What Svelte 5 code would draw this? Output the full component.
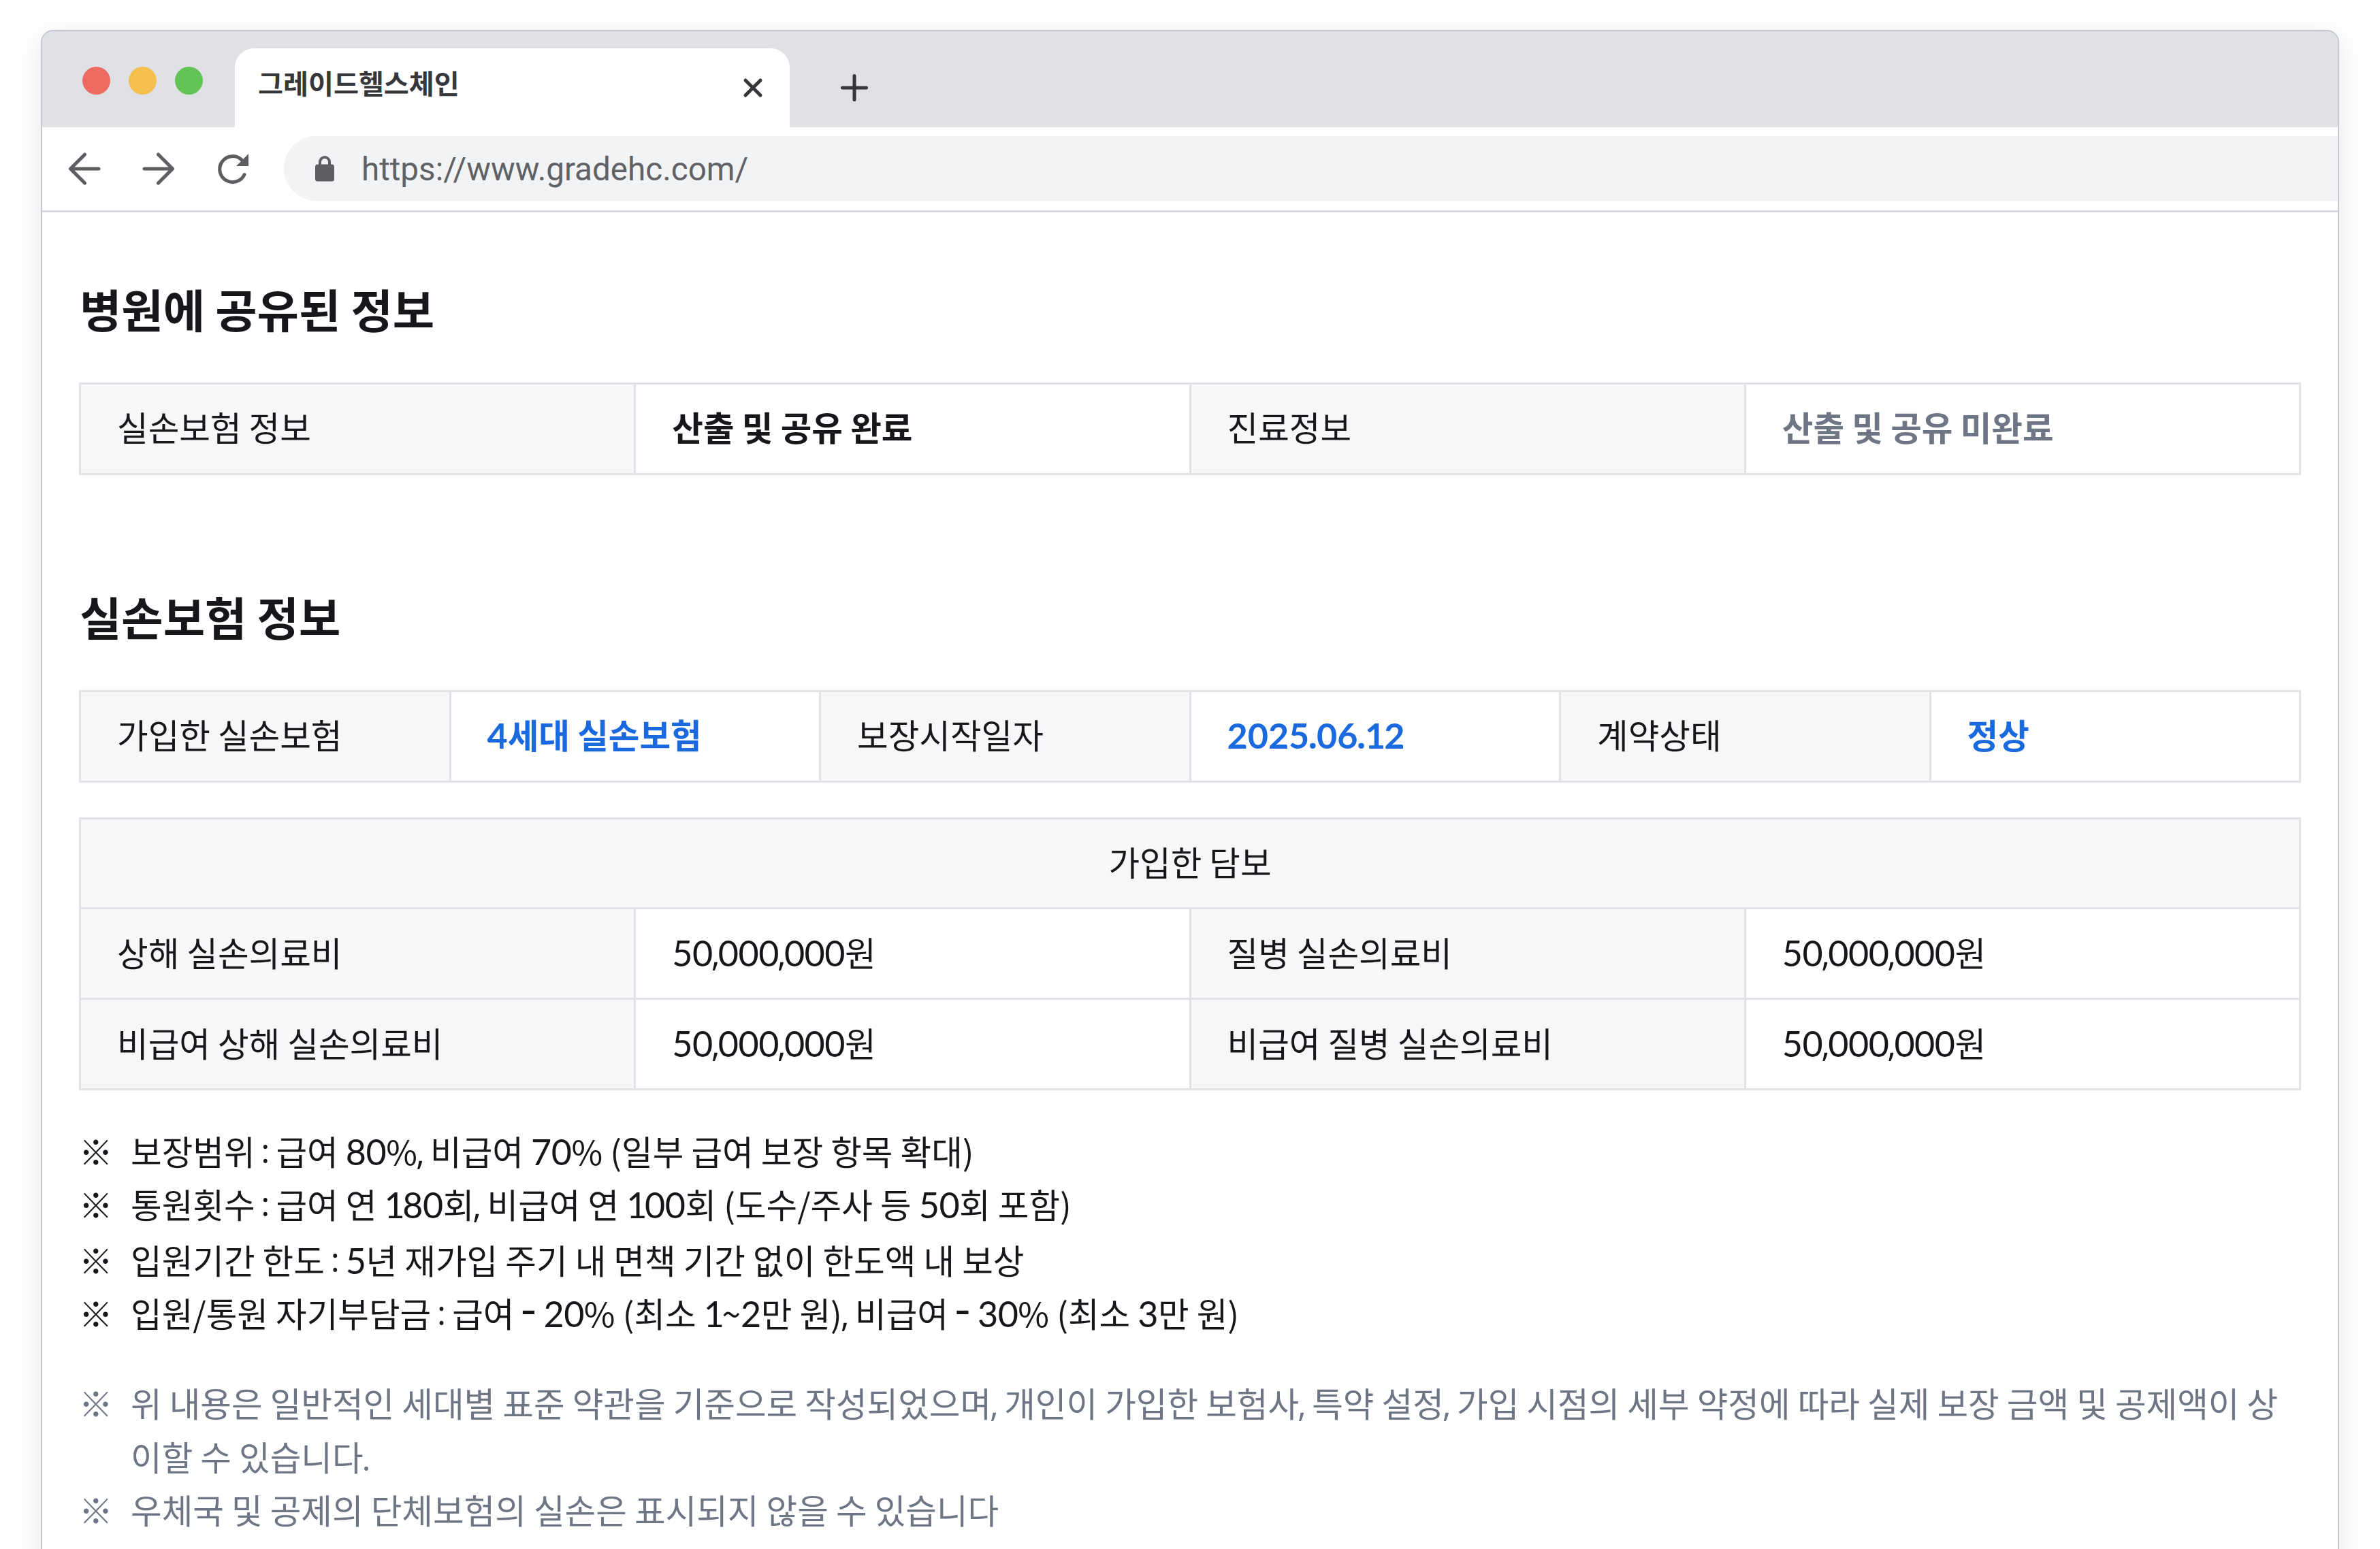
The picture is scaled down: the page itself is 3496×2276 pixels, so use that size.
<script>
    /**
     * Browser window with the patient's shared insurance information
     */
    const tabTitle = '그레이드헬스체인';
    const url = 'https://www.gradehc.com/';

    const shareCells = [
        { text: '실손보험 정보', kind: 'label' },
        { text: '산출 및 공유 완료', kind: 'strong' },
        { text: '진료정보', kind: 'label' },
        { text: '산출 및 공유 미완료', kind: 'pending' }
    ];

    const contractCells = [
        { text: '가입한 실손보험', kind: 'label' },
        { text: '4세대 실손보험', kind: 'link' },
        { text: '보장시작일자', kind: 'label' },
        { text: '2025.06.12', kind: 'link' },
        { text: '계약상태', kind: 'label' },
        { text: '정상', kind: 'link' }
    ];

    const coverageCells = [
        { text: '가입한 담보', kind: 'label full' },
        { text: '상해 실손의료비', kind: 'label' },
        { text: '50,000,000원', kind: 'value' },
        { text: '질병 실손의료비', kind: 'label' },
        { text: '50,000,000원', kind: 'value' },
        { text: '비급여 상해 실손의료비', kind: 'label' },
        { text: '50,000,000원', kind: 'value' },
        { text: '비급여 질병 실손의료비', kind: 'label' },
        { text: '50,000,000원', kind: 'value' }
    ];

    const notes = [
        '보장범위 : 급여 80%, 비급여 70% (일부 급여 보장 항목 확대)',
        '통원횟수 : 급여 연 180회, 비급여 연 100회 (도수/주사 등 50회 포함)',
        '입원기간 한도 : 5년 재가입 주기 내 면책 기간 없이 한도액 내 보상',
        '입원/통원 자기부담금 : 급여 - 20% (최소 1~2만 원), 비급여 - 30% (최소 3만 원)'
    ];

    const disclaimers = [
        '위 내용은 일반적인 세대별 표준 약관을 기준으로 작성되었으며, 개인이 가입한 보험사, 특약 설정, 가입 시점의 세부 약정에 따라 실제 보장 금액 및 공제액이 상이할 수 있습니다.',
        '우체국 및 공제의 단체보험의 실손은 표시되지 않을 수 있습니다'
    ];

    // Digits and light punctuation have their own faces, hangul keeps the base one
    function split(text) {
        return text.split(/(1|[02-9]+|[,.]|:|-)/).filter(Boolean);
    }

    function face(part) {
        if (part === '1') return 'digit one';
        if (/^[0-9]/.test(part)) return 'digit';
        if (part === ',' || part === '.') return 'punct';
        if (part === ':') return 'punct colon';
        if (part === '-') return 'dash';
        return '';
    }
</script>

{#snippet mixed(text)}{#each split(text) as part}{#if face(part)}<span class={face(part)}>{part}</span>{:else}{part}{/if}{/each}{/snippet}

{#snippet grid(cells, cols)}
    <div class="grid {cols}">
        {#each cells as cell}
            <div class="cell {cell.kind}"><span>{@render mixed(cell.text)}</span></div>
        {/each}
    </div>
{/snippet}

<div class="page">
    <div class="window">
        <div class="tabbar">
            <div class="dots">
                <i class="red"></i>
                <i class="yellow"></i>
                <i class="green"></i>
            </div>
            <div class="tab">
                <span class="tab-title">{tabTitle}</span>
                <svg class="close" viewBox="0 0 28 28"><path d="M3 3L25 25M25 3L3 25" /></svg>
            </div>
            <svg class="plus" viewBox="0 0 40 40"><path d="M20 2.5V37.5M2.5 20H37.5" /></svg>
        </div>

        <div class="toolbar">
            <svg class="nav" viewBox="0 0 48 48"><path d="M24.5 3L3.5 24L24.5 45M4 24H45" /></svg>
            <svg class="nav" viewBox="0 0 48 48"><path d="M23.5 3L44.5 24L23.5 45M44 24H3" /></svg>
            <svg class="nav" viewBox="0 0 48 48">
                <path d="M41 32.5A19 19 0 1 1 36.6 10.6L40 14" />
                <path class="solid" d="M47 2V20H29Z" />
            </svg>
            <div class="address">
                <svg class="lock" viewBox="0 0 28 38">
                    <path d="M7 15V9a7 7 0 0 1 14 0V15" />
                    <rect x="0" y="12.5" width="28" height="25" rx="3.5" />
                </svg>
                <span>{url}</span>
            </div>
        </div>

        <div class="content">
            <h2>병원에 공유된 정보</h2>
            {@render grid(shareCells, 'four')}

            <h2 class="second">실손보험 정보</h2>
            {@render grid(contractCells, 'six')}
            {@render grid(coverageCells, 'four')}

            <ul class="notes">
                {#each notes as note}
                    <li><span class="mark">※</span><span>{@render mixed(note)}</span></li>
                {/each}
            </ul>
            <ul class="notes muted">
                {#each disclaimers as note}
                    <li><span class="mark">※</span><span>{@render mixed(note)}</span></li>
                {/each}
            </ul>
        </div>
    </div>
</div>

<style>
    .page {
        box-sizing: border-box;
        width: 3496px;
        height: 2276px;
        padding: 44px 60px 0;
        overflow: hidden;
        background: #fff;
        color: #15171b;
        font-family: "Noto Sans CJK KR", sans-serif;
        font-size: 49.6px;
    }

    .window {
        box-sizing: border-box;
        height: 2400px;
        border: 2px solid #c5c7d0;
        border-radius: 18px;
        overflow: hidden;
        background: #fff;
        box-shadow: 0 10px 40px rgba(0, 0, 0, 0.1);
    }

    .tabbar {
        box-sizing: border-box;
        display: flex;
        height: 140.5px;
        padding-left: 58.5px;
        background: #dfe1e5;
    }

    .dots {
        display: flex;
        gap: 27px;
        width: 224.5px;
        padding-top: 52px;
    }

    .dots i {
        width: 41px;
        height: 41px;
        border-radius: 50%;
    }

    .red {
        background: #ed6b60;
    }

    .yellow {
        background: #f5bf50;
    }

    .green {
        background: #62c454;
    }

    .tab {
        box-sizing: border-box;
        display: flex;
        justify-content: space-between;
        width: 815px;
        margin-top: 25px;
        padding: 0 40px 0 34px;
        border-radius: 28px 28px 0 0;
        background: #fff;
    }

    .tab-title {
        font-size: 40.2px;
        font-weight: 700;
        line-height: 100px;
        color: #35373b;
    }

    svg {
        flex: none;
        overflow: visible;
        fill: none;
        stroke: #5c5e62;
        stroke-width: 5;
        stroke-linecap: round;
        stroke-linejoin: round;
    }

    .close {
        width: 28px;
        height: 28px;
        margin-top: 44px;
        stroke: #35373b;
    }

    .plus {
        width: 40px;
        height: 40px;
        margin: 63px 0 0 75px;
        stroke: #35373b;
    }

    .toolbar {
        box-sizing: border-box;
        display: flex;
        align-items: center;
        height: 125.5px;
        padding-left: 38px;
        border-bottom: 3px solid #d4d6db;
    }

    .nav {
        width: 48px;
        height: 48px;
        margin-right: 61px;
    }

    .nav .solid {
        fill: #5c5e62;
        stroke: none;
    }

    .address {
        display: flex;
        flex: 1;
        align-items: center;
        gap: 40px;
        height: 95px;
        margin-left: -10px;
        padding-left: 46px;
        border-radius: 48px 0 0 48px;
        background: #f1f3f4;
        color: #5f6165;
        font-family: Roboto, sans-serif;
        font-size: 47.6px;
    }

    .address span {
        padding-top: 2px;
    }

    .lock {
        width: 28px;
        height: 38px;
        stroke-width: 4;
    }

    .lock rect {
        fill: #5c5e62;
        stroke: none;
    }

    .content {
        padding: 0 54px;
    }

    h2 {
        height: 159px;
        margin: 0;
        padding: 91px 0 0 1px;
        font-size: 66.7px;
        font-weight: 700;
        line-height: 100px;
    }

    h2.second {
        padding-top: 157px;
    }

    .digit {
        font-family: Lato, sans-serif;
        font-size: 1.05em;
        line-height: 1;
        letter-spacing: -0.5px;
    }

    .one {
        letter-spacing: -3.5px;
    }

    .punct {
        margin-left: -2px;
        font-family: "Open Sans", sans-serif;
        line-height: 1;
        letter-spacing: -2.8px;
    }

    .colon {
        margin-left: -2.3px;
        letter-spacing: -2px;
        vertical-align: 3px;
    }

    .dash {
        margin-left: -3px;
        font-family: Lato, sans-serif;
        font-size: 1.4em;
        line-height: 0.8;
        letter-spacing: -2px;
        vertical-align: 1px;
    }

    .link .digit {
        letter-spacing: 0;
    }

    .link .one {
        letter-spacing: -2px;
    }

    .link .punct {
        letter-spacing: -1.5px;
    }

    .grid {
        display: grid;
        grid-auto-rows: 129.8px;
        gap: 3px;
        padding: 3px;
        background: #e1e2e7;
    }

    .four {
        grid-template-columns: repeat(4, 1fr);
    }

    .six {
        grid-template-columns: repeat(6, 1fr);
    }

    .grid + .grid {
        margin-top: 51px;
    }

    .cell {
        display: flex;
        align-items: center;
        padding: 0 0 7px 53px;
        background: #fff;
        white-space: nowrap;
    }

    .cell.label {
        background: #f7f7f8;
    }

    .cell.full {
        grid-column: 1 / -1;
        justify-content: center;
        padding-left: 0;
    }

    .strong,
    .pending,
    .link {
        font-weight: 700;
    }

    .pending {
        color: #6e7585;
    }

    .link {
        color: #1b69de;
    }

    .notes {
        margin: 49px 0 0;
        padding: 0;
        list-style: none;
        line-height: 78.4px;
    }

    .notes li {
        display: flex;
    }

    .notes li:nth-child(3) {
        margin-top: 3px;
    }

    .mark {
        flex: none;
        width: 76px;
    }

    .notes.muted {
        margin-top: 53.5px;
        color: #6e7585;
    }
</style>
